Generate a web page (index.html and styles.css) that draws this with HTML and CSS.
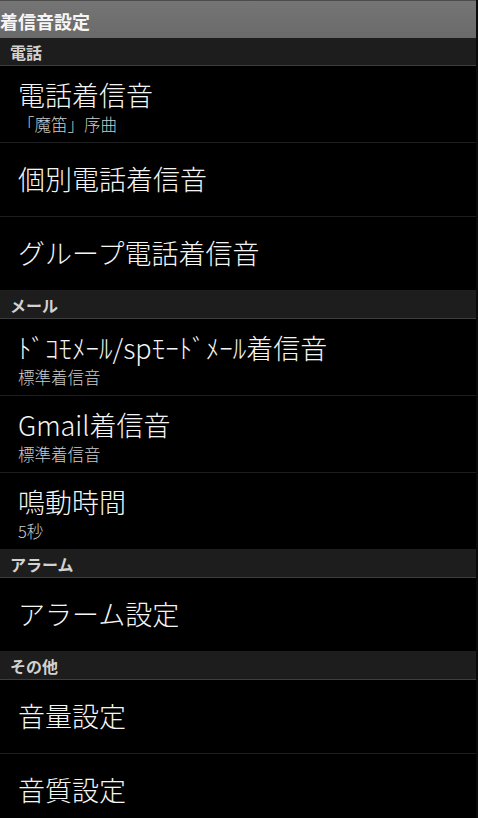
FILE: index.html
```html
<!DOCTYPE html>
<html lang="ja">
<head>
<meta charset="utf-8">
<title>着信音設定</title>
<link rel="stylesheet" href="styles.css">
</head>
<body>
<div class="screen">
  <header class="titlebar">着信音設定</header>

  <div class="section">電話</div>
  <div class="row sub"><div class="title">電話着信音</div><div class="summary">「魔笛」序曲</div></div>
  <div class="row"><div class="title">個別電話着信音</div></div>
  <div class="row"><div class="title">グループ電話着信音</div></div>

  <div class="section">メール</div>
  <div class="row sub"><div class="title">ﾄﾞｺﾓﾒｰﾙ/spﾓｰﾄﾞﾒｰﾙ着信音</div><div class="summary">標準着信音</div></div>
  <div class="row sub"><div class="title">Gmail着信音</div><div class="summary">標準着信音</div></div>
  <div class="row sub"><div class="title">鳴動時間</div><div class="summary">5秒</div></div>

  <div class="section">アラーム</div>
  <div class="row"><div class="title">アラーム設定</div></div>

  <div class="section">その他</div>
  <div class="row"><div class="title">音量設定</div></div>
  <div class="row"><div class="title">音質設定</div></div>
</div>
</body>
</html>
```

FILE: styles.css
```css
html, body {
  margin: 0;
  padding: 0;
  background: #000;
  height: 100%;
  overflow: hidden;
}

body {
  font-family: "Noto Sans CJK JP", "Noto Sans", sans-serif;
  color: #f2f2f2;
}

.screen {
  width: 476px;
  border-right: 2px solid #0b0b0b;
}

.titlebar {
  box-sizing: border-box;
  height: 38px;
  padding: 3px 0 0 0;
  border-top: 1px solid #4c4c4c;
  background: linear-gradient(#757575, #6a6a6a);
  font-size: 18px;
  font-weight: bold;
  line-height: 34px;
  color: #f6f6f6;
  white-space: nowrap;
}

.section {
  box-sizing: border-box;
  height: 28px;
  padding: 1px 0 0 10px;
  background: #1d1d1d;
  border-bottom: 1px solid #3e3e3e;
  font-size: 16px;
  font-weight: bold;
  line-height: 26px;
  color: #d2d2d2;
}

.row {
  box-sizing: border-box;
  height: 74px;
  padding: 0 0 0 18px;
  border-bottom: 1px solid #1e1e1e;
  display: flex;
  flex-direction: column;
  justify-content: center;
}

.row.sub {
  height: 77px;
  justify-content: flex-start;
  padding-top: 12px;
}

.title {
  font-size: 27px;
  font-weight: 300;
  line-height: 34px;
  color: #f5f5f5;
  white-space: nowrap;
}

.row:not(.sub) .title {
  margin-top: -1px;
}

.summary {
  font-size: 16.5px;
  font-weight: 300;
  line-height: 24px;
  color: #cdcdcd;
  white-space: nowrap;
}
```
